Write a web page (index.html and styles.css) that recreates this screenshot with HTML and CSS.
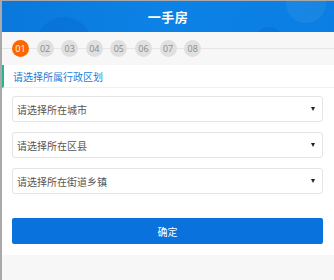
FILE: index.html
```html
<!doctype html>
<html>
    <head>
        <title>一手房</title>
        <link rel="stylesheet" href="styles.css">
    </head>
<body>
    <div class="page">
        <div class="header">
            <i class="bubble bubble-1"></i>
            <i class="bubble bubble-2"></i>
            <i class="bubble bubble-3"></i>
            <h1>一手房</h1>
        </div>

        <div class="steps">
            <span class="step active">01</span>
            <span class="step">02</span>
            <span class="step">03</span>
            <span class="step">04</span>
            <span class="step">05</span>
            <span class="step">06</span>
            <span class="step">07</span>
            <span class="step">08</span>
        </div>

        <div class="panel">
            <div class="panel-title">请选择所属行政区划</div>
            <div class="form">
                <div class="select"><span>请选择所在城市</span><i class="arrow"></i></div>
                <div class="select"><span>请选择所在区县</span><i class="arrow"></i></div>
                <div class="select"><span>请选择所在街道乡镇</span><i class="arrow"></i></div>
                <button class="btn">确定</button>
            </div>
        </div>
    </div>
</body>
</html>
```

FILE: styles.css
```css
* { margin: 0; padding: 0; box-sizing: border-box; }
body {
    font: 10px "Noto Sans CJK SC", "Liberation Sans", sans-serif;
    background-color: #f7f7f7;
    height: 280px;
    overflow: hidden;
    border-left: 2px solid #a9a9a9;
    border-top: 1px solid #a9a9a9;
}

.header {
    position: relative;
    overflow: hidden;
    height: 31px;
    background: linear-gradient(100deg, #0a78dc 0%, #0d82e6 50%, #0a7ee2 100%);
    display: flex;
    align-items: center;
    justify-content: center;
}

.header h1 {
    position: relative;
    color: #fff;
    font-size: 13px;
    font-weight: bold;
    letter-spacing: 0.5px;
}

.bubble {
    position: absolute;
    border-radius: 50%;
    background-color: rgba(0, 90, 200, 0.25);
}

.bubble-1 { width: 56px; height: 56px; left: 34px; top: 16px; }
.bubble-2 { width: 40px; height: 40px; right: 8px; top: -18px; background-color: rgba(255, 255, 255, 0.06); }
.bubble-3 { width: 30px; height: 30px; left: 252px; top: 26px; }

.steps {
    height: 32px;
    padding-left: 10px;
    display: flex;
    align-items: center;
    gap: 7.6px;
    background: linear-gradient(#e6e6e6, #e6e6e6) 0 50% / 100% 1px no-repeat, #f7f7f7;
}

.step {
    width: 17px;
    height: 17px;
    border-radius: 50%;
    background-color: #e0e0e0;
    color: #8a8a8a;
    font: 9px "Open Sans", "Liberation Sans", sans-serif;
    display: flex;
    align-items: center;
    justify-content: center;
}

.step.active {
    background-color: #ff6600;
    color: #fff;
}

.panel {
    background-color: #fff;
    padding-bottom: 11px;
}

.panel-title {
    height: 23px;
    line-height: 23px;
    padding-left: 9px;
    border-left: 2px solid #2bb58e;
    border-bottom: 1px solid #f0f0f0;
    color: #1d7dd6;
    font-size: 10px;
    margin-top: 1px;
}

.form {
    padding: 8px 11px 0 10px;
    display: flex;
    flex-direction: column;
    gap: 10px;
}

.select {
    height: 26px;
    border: 1px solid #e4e4e4;
    border-radius: 3px;
    padding: 0 7px 0 4px;
    display: flex;
    align-items: center;
    justify-content: space-between;
    color: #555;
    font-size: 10px;
}

.arrow {
    width: 0;
    height: 0;
    border-left: 2.5px solid transparent;
    border-right: 2.5px solid transparent;
    border-top: 4px solid #222;
}

.btn {
    margin-top: 14px;
    height: 26px;
    border: none;
    border-radius: 2px;
    background-color: #0a72dc;
    color: #fff;
    font: 10px "Noto Sans CJK SC", sans-serif;
}
```
